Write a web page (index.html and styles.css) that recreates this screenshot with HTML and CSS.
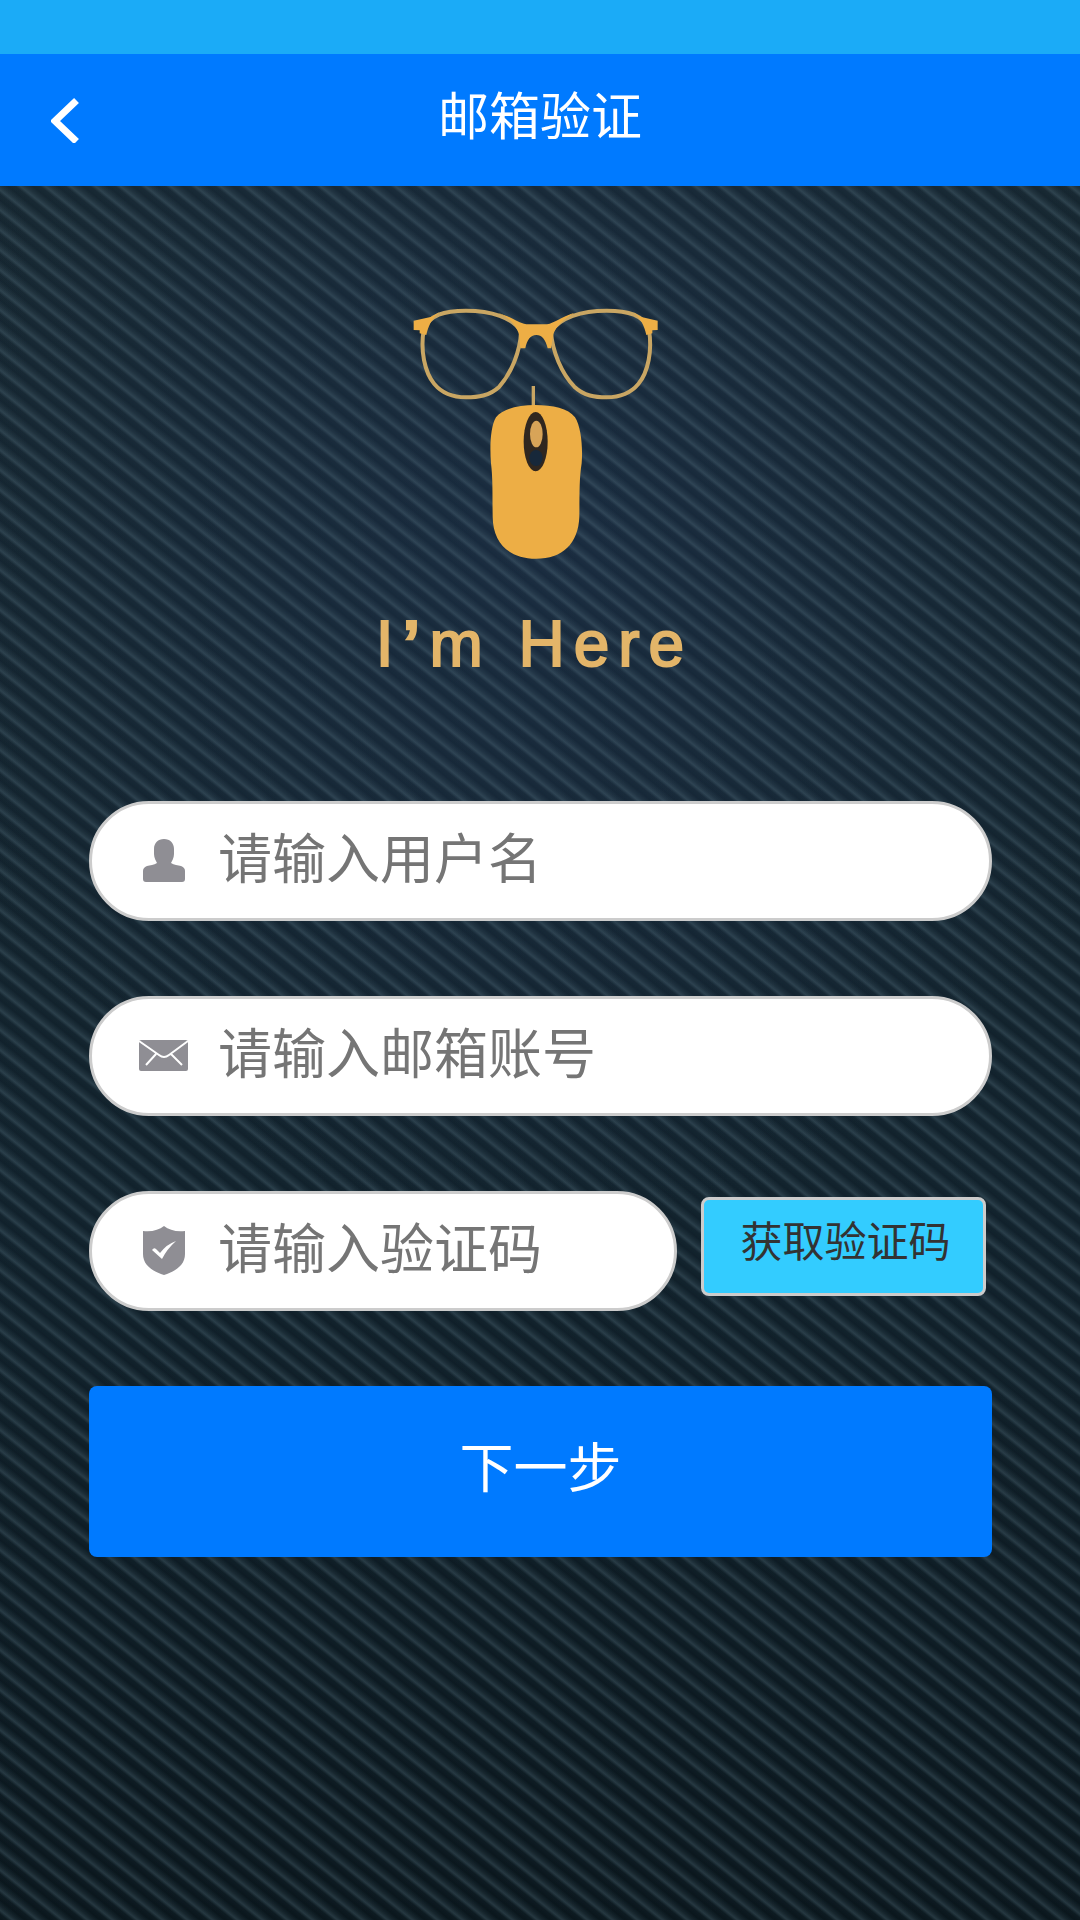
FILE: index.html
```html
<!DOCTYPE html>
<html lang="zh-CN">
<head>
<meta charset="utf-8">
<meta name="viewport" content="width=device-width, initial-scale=1">
<title>邮箱验证</title>
<link rel="stylesheet" href="styles.css">
</head>
<body>
<div class="status-bar"></div>
<header class="nav">
  <a class="nav-back" href="#" aria-label="返回">
    <svg width="28" height="46" viewBox="0 0 28 46"><path d="M25.500 3.500L4 24l21.500 20.500" fill="none" stroke="#fff" stroke-width="7"/></svg>
  </a>
  <h1 class="nav-title">邮箱验证</h1>
</header>
<main class="page">
  <div class="logo">
    <svg class="logo-art" viewBox="0 0 960 900" aria-hidden="true">
      <g fill="none" stroke="#c9a663" stroke-width="12">
        <path d="M128 150C145 105 190 92 255 92C330 92 395 112 420 155C418 215 390 280 355 320C325 348 290 352 255 352C215 352 185 342 160 312C130 276 118 210 128 150Z"/>
        <path d="M804 150C787 105 742 92 677 92C602 92 537 112 510 155C514 215 542 280 580 320C610 348 642 352 677 352C717 352 747 342 772 312C802 276 814 210 804 150Z"/>
        <path d="M457 318V385" stroke-width="10"/>
      </g>
      <g fill="#edae45">
        <path d="M98 122L152 110L175 97C150 118 142 140 136 165L116 160V151L98 150Z"/>
        <path d="M830 122L778 110L757 97C782 118 790 140 796 165L814 160V151L830 150Z"/>
        <path d="M350 98C395 112 410 128 436 133H498C520 128 540 112 580 98C545 120 525 138 517 163L510 205H500C494 178 482 165 466 165C448 165 438 180 433 205H418L414 163C405 138 390 115 350 98Z"/>
        <path d="M345 412C365 385 415 375 462 375C515 375 562 385 582 412C600 440 606 500 602 550C594 600 596 650 595 710C592 790 545 836 465 836C385 836 336 790 335 710C334 650 336 600 330 550C326 500 328 440 345 412Z"/>
      </g>
      <ellipse cx="464" cy="485" rx="36" ry="89" fill="#30271f"/>
      <ellipse cx="466" cy="462" rx="19" ry="40" fill="#d8a458"/>
      <ellipse cx="465" cy="534" rx="20" ry="24" fill="#17283a"/>
    </svg>
    <p class="logo-name">I<b>’</b>m Here</p>
  </div>
  <form class="form">
    <label class="field">
      <svg class="icon" viewBox="0 0 48 48" aria-hidden="true"><path fill="#8f8e94" d="M24 2C30 2 34 6 34 12V17C34 21 32 24 31 26C34 28 38 28 41 29C44 30 45 32 45 34V42C45 44 44 45 42 45H6C4 45 3 44 3 42V34C3 32 4 30 7 29C10 28 14 28 17 26C16 24 14 21 14 17V12C14 6 18 2 24 2Z"/></svg>
      <input class="input" type="text" placeholder="请输入用户名" aria-label="用户名">
    </label>
    <label class="field">
      <svg class="icon" viewBox="0 0 48 48" aria-hidden="true"><rect x="-1" y="8" width="49" height="31" rx="2" fill="#8f8e94"/><path d="M-1 9L19 23Q24 27 29 23L48 9M16 22L6 33M31 22L42 33" fill="none" stroke="#fff" stroke-width="2"/></svg>
      <input class="input" type="email" placeholder="请输入邮箱账号" aria-label="邮箱账号">
    </label>
    <div class="code-row">
      <label class="field">
        <svg class="icon" viewBox="0 0 48 48" aria-hidden="true"><path fill="#8f8e94" d="M24 -1C29 3 36 5 45 4V27C45 38 36 44 24 48C12 44 3 38 3 27V4C12 5 19 3 24 -1Z"/><path fill="#fff" d="M12 23Q14 20 16 22L20 26Q27 17 36 14Q27 22 22 32Z"/></svg>
        <input class="input" type="text" placeholder="请输入验证码" aria-label="验证码">
      </label>
      <button class="code-button" type="button">获取验证码</button>
    </div>
    <button class="submit" type="submit">下一步</button>
  </form>
</main>
</body>
</html>
```
FILE: styles.css
```css
* {
  box-sizing: border-box;
}

body {
  margin: 0;
  min-height: 100vh;
  display: flex;
  flex-direction: column;
  font-family: "Noto Sans CJK SC", sans-serif;
}

.status-bar {
  height: 54px;
  background: #1babf7;
}

.nav {
  height: 132px;
  padding: 0 51px;
  display: grid;
  grid-template-columns: 28px 1fr 28px;
  align-items: center;
  background: #007aff;
}

.nav-back {
  display: flex;
}

.nav-title {
  margin: 0;
  padding-bottom: 14px;
  font-size: 51px;
  font-weight: 400;
  line-height: 64px;
  color: #fff;
  text-align: center;
}

/* Diagonal twill over a dark blue glow */
.page {
  flex: 1;
  padding: 94px 88px 94px 89px;
  background:
    linear-gradient(to top right,
      rgba(100, 130, 145, .02) 0%, rgba(100, 130, 145, .06) 15%,
      rgba(100, 130, 145, .32) 25%,
      rgba(100, 130, 145, .16) 35%, rgba(100, 130, 145, .02) 50%,
      rgba(100, 130, 145, .06) 65%,
      rgba(100, 130, 145, .32) 75%,
      rgba(100, 130, 145, .16) 85%, rgba(100, 130, 145, .02) 100%) 0 14px / 25px 20px,
    radial-gradient(ellipse 60% 40% at 50% 20%, rgba(24, 42, 63, .9), rgba(24, 42, 63, 0)),
    linear-gradient(#14242d, #0f1f29 60%, #08141a);
}

.logo {
  display: flex;
  flex-direction: column;
  align-items: center;
}

.logo-art {
  width: 320px;
  height: 300px;
}

.logo-name {
  margin: 28px 12px 0 0;
  font-family: "Liberation Sans", sans-serif;
  font-size: 64px;
  line-height: 72px;
  letter-spacing: 9px;
  color: #e3b569;
  -webkit-text-stroke: 2px #e3b569;
}

.form {
  margin-top: 121px;
  display: flex;
  flex-direction: column;
  gap: 75px;
}

.field {
  height: 120px;
  flex: 1 1 auto;
  min-width: 0;
  padding: 0 40px 0 48px;
  display: flex;
  align-items: center;
  gap: 30px;
  background: #fff;
  border: 3px solid #ccc;
  border-radius: 60px;
}

.icon {
  flex: none;
  width: 48px;
  height: 48px;
  overflow: visible;
}

.input {
  flex: 1;
  min-width: 0;
  height: 100px;
  padding: 0 0 12px;
  border: 0;
  outline: 0;
  background: none;
  font: inherit;
  font-size: 54px;
  color: #333;
}

.input::placeholder {
  color: #757575;
  opacity: 1;
}

.code-row {
  padding-right: 6px;
  display: flex;
  align-items: flex-start;
  gap: 24px;
}

.code-button {
  flex: none;
  width: 285px;
  height: 99px;
  margin-top: 6px;
  padding: 0 0 16px 4px;
  border: 3px solid #ccc;
  border-radius: 8px;
  background: #3cf;
  font: inherit;
  font-size: 42px;
  color: #333;
}

.submit {
  height: 171px;
  padding: 0 0 14px;
  border: 0;
  border-radius: 8px;
  background: #007aff;
  font: inherit;
  font-size: 54px;
  color: #fff;
}
```
